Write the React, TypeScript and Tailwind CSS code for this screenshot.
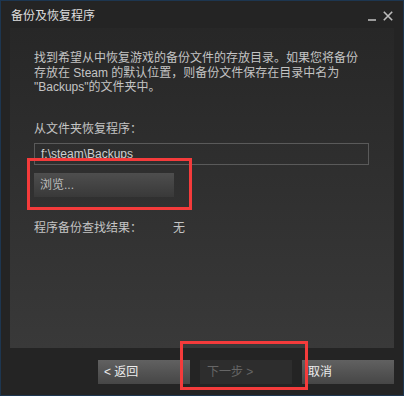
const font = { fontFamily: '"Liberation Sans", "Noto Sans CJK SC", sans-serif' }

export default function App() {
  return (
    <div
      style={font}
      className="relative w-[404px] h-[396px] flex flex-col bg-[#242424] border border-[#1d3650] text-[12px] text-[#c4c4c4]"
    >
      {/* title bar */}
      <div className="h-[27px] shrink-0 flex items-center justify-between pl-[10px] pr-[10px]">
        <span className="text-[12px] text-[#dedede] leading-none pt-[2px]">备份及恢复程序</span>
        <div className="flex items-end gap-[7px] pt-[2px]">
          <div className="w-[8px] h-[2px] bg-[#9a9a9a]" />
          <svg width="10" height="10" viewBox="0 0 10 10" className="text-[#bdbdbd]">
            <path d="M0.8 0.8 9.2 9.2M9.2 0.8 0.8 9.2" stroke="currentColor" strokeWidth="1.6" />
          </svg>
        </div>
      </div>

      {/* content panel */}
      <div className="mx-[9px] h-[320px] shrink-0 bg-gradient-to-b from-[#272727] to-[#393939] pl-[24px] pr-[25px] pt-[23px]">
        <p className="leading-[14.5px]">
          找到希望从中恢复游戏的备份文件的存放目录。如果您将备份
          <br />
          存放在 Steam 的默认位置，则备份文件保存在目录中名为
          <br />
          "Backups"的文件夹中。
        </p>

        <div className="mt-[27px] leading-[14.5px]">从文件夹恢复程序：</div>

        <div className="mt-[7px] h-[22px] border border-[#5a5a5a] flex items-center pl-[6px] text-[#cfcfcf]">
          f:\steam\Backups
        </div>

        <button className="mt-[8px] w-[140px] h-[24px] flex items-center pl-[6px] bg-gradient-to-b from-[#4e4e4e] to-[#393939] text-[#bdbdbd]">
          浏览...
        </button>

        <div className="mt-[24px] flex leading-[14.5px]">
          <span className="w-[139px]">程序备份查找结果：</span>
          <span>无</span>
        </div>
      </div>

      {/* buttons */}
      <div className="mt-[12px] flex justify-end gap-[10px] pr-[9px]">
        <button className="w-[92px] h-[24px] flex items-center pl-[6px] bg-gradient-to-b from-[#616161] to-[#464646] text-[#ececec]">
          &lt; 返回
        </button>
        <button className="w-[92px] h-[24px] flex items-center pl-[7px] bg-[#2d2d2d] text-[#666666]">
          下一步 &gt;
        </button>
        <button className="w-[92px] h-[24px] flex items-center pl-[6px] bg-gradient-to-b from-[#616161] to-[#464646] text-[#ececec]">
          取消
        </button>
      </div>

      {/* annotation boxes */}
      <div className="absolute left-[26px] top-[157px] w-[165px] h-[52px] border-[3px] border-[#f43b3b]" />
      <div className="absolute left-[179px] top-[340px] w-[128px] h-[49px] border-[3px] border-[#f43b3b]" />
    </div>
  )
}
